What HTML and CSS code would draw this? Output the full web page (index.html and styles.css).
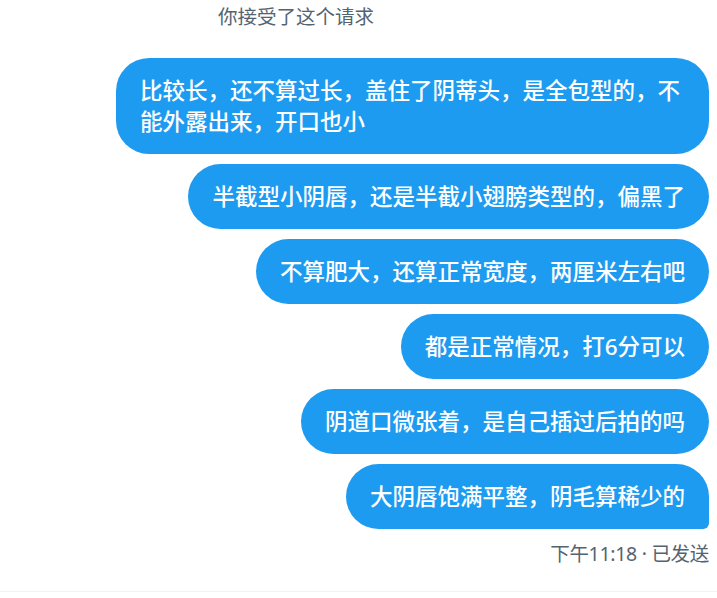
FILE: index.html
```html
<!DOCTYPE html>
<html lang="zh-CN">
<head>
    <meta charset="UTF-8">
    <meta name="viewport" content="width=device-width, initial-scale=1.0">
    <title>私信</title>
    <link rel="stylesheet" href="styles.css">
</head>
<body>

<div class="conversation">
    <div class="notice">你接受了这个请求</div>

    <div class="messages">
        <div class="bubble">比较长，还不算过长，盖住了阴蒂头，是全包型的，不能外露出来，开口也小</div>
        <div class="bubble">半截型小阴唇，还是半截小翅膀类型的，偏黑了</div>
        <div class="bubble">不算肥大，还算正常宽度，两厘米左右吧</div>
        <div class="bubble">都是正常情况，打6分可以</div>
        <div class="bubble">阴道口微张着，是自己插过后拍的吗</div>
        <div class="bubble last">大阴唇饱满平整，阴毛算稀少的</div>
    </div>

    <div class="meta">下午11:18 · 已发送</div>
</div>

<div class="composer-line"></div>

</body>
</html>
```

FILE: styles.css
```css
body {
    margin: 0;
    background-color: #fff;
    font-family: "Noto Sans", "Noto Sans CJK SC", sans-serif;
    color: #0f1419;
}
.conversation {
    padding: 0 8px 0 8px;
}
.notice {
    padding: 4px 0 0 210px;
    height: 54px;
    font-size: 19.5px;
    line-height: 26px;
    color: #536471;
}
.messages {
    display: flex;
    flex-direction: column;
    align-items: flex-end;
    gap: 10px;
}
.bubble {
    max-width: 545px;
    padding: 17px 24px;
    border-radius: 33px;
    background-color: #1d9bf0;
    color: #fff;
    font-size: 22.5px;
    font-weight: 500;
    line-height: 31px;
}
.bubble.last {
    border-bottom-right-radius: 6px;
}
.meta {
    margin-top: 12px;
    text-align: right;
    font-size: 19.5px;
    line-height: 26px;
    letter-spacing: -0.3px;
    color: #536471;
}
.composer-line {
    margin-top: 24px;
    border-top: 1px solid #eff3f4;
}
```
